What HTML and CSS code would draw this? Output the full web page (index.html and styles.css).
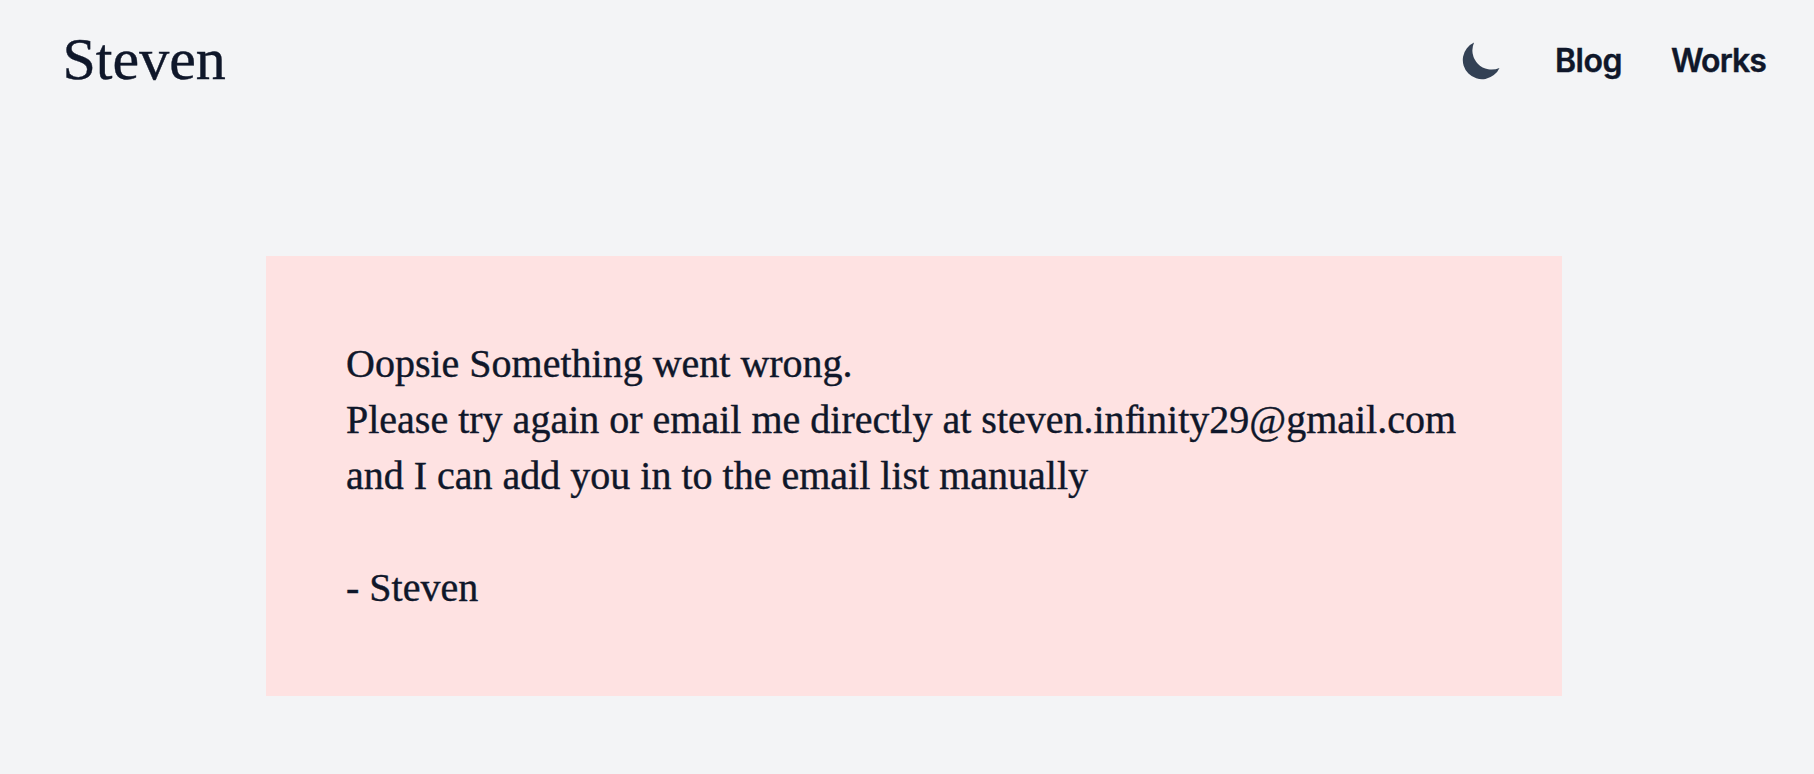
FILE: index.html
```
<!DOCTYPE html>
<html lang="en">
<head>
<meta charset="utf-8">
<title>Steven</title>
<link rel="stylesheet" href="styles.css">
</head>
<body>
<header class="header">
  <a class="logo">Steven</a>
  <nav class="nav">
    <svg class="moon" viewBox="0 0 20 20" fill="currentColor"><path d="M17.293 13.293A8 8 0 016.707 2.707a8.001 8.001 0 1010.586 10.586z"/></svg>
    <a class="link blog">Blog</a>
    <a class="link works">Works</a>
  </nav>
</header>
<main class="notice">
  <p>Oopsie Something went wrong.</p>
  <p>Please try again or email me directly at steven.in<span class="tight">f</span>inity29@gmail.com</p>
  <p>and I can add you in to the email list manually</p>
  <p class="sign">- Steven</p>
</main>
</body>
</html>
```
FILE: styles.css
```
body { margin: 0; background: #f3f4f6; color: #0f172a; font-family: "Liberation Serif", serif; -webkit-text-stroke: 0.4px #0f172a; }
.header { display: flex; justify-content: space-between; align-items: center; height: 120px; padding: 0 48px 0 62.5px; }
.logo { font-size: 60px; line-height: 72px; padding-bottom: 2px; }
.nav { display: flex; align-items: center; }
.moon { width: 48px; height: 48px; color: #334155; margin-right: 49px; -webkit-text-stroke: 0; }
.link { font: 600 32px/40px Inter, sans-serif; padding-top: 2px; }
.blog { margin-right: 49px; letter-spacing: -0.5px; }
.works { letter-spacing: -0.9px; }
.notice { box-sizing: border-box; width: 1296px; height: 440px; margin: 136px 0 0 266px; padding: 80px; background: #fee2e2; font-size: 40px; line-height: 56px; }
.notice p { margin: 0; white-space: nowrap; }
.notice .sign { margin-top: 56px; }
.tight { letter-spacing: -2px; }
```
